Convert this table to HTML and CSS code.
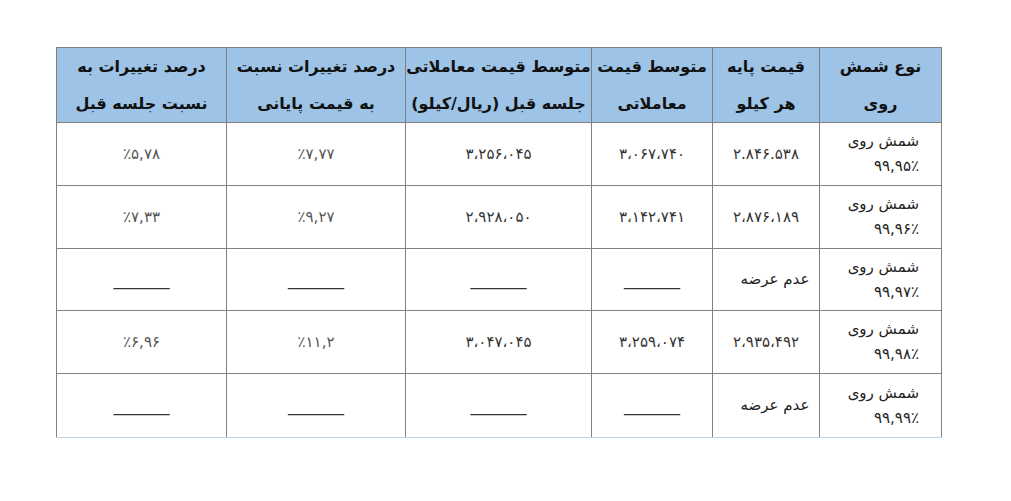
FILE: index.html
```html
<!DOCTYPE html>
<html lang="fa">
<head>
<meta charset="utf-8">
<title>جدول شمش روی</title>
<link rel="stylesheet" href="styles.css">
</head>
<body>
<div class="page">
<table class="grid" dir="rtl">
  <colgroup>
    <col class="c-type">
    <col class="c-base">
    <col class="c-avg">
    <col class="c-prev">
    <col class="c-chg-final">
    <col class="c-chg-prev">
  </colgroup>
  <thead>
    <tr class="head">
      <th>نوع شمش<br>روی</th>
      <th>قیمت پایه<br>هر کیلو</th>
      <th>متوسط قیمت<br>معاملاتی</th>
      <th>متوسط قیمت معاملاتی<br>جلسه قبل (ریال/کیلو)</th>
      <th>درصد تغییرات نسبت<br>به قیمت پایانی</th>
      <th>درصد تغییرات به<br>نسبت جلسه قبل</th>
    </tr>
  </thead>
  <tbody>
    <tr class="r63">
      <td class="type">شمش روی<br>۹۹,۹۵٪</td>
      <td>۲.۸۴۶.۵۳۸</td>
      <td>۳،۰۶۷،۷۴۰</td>
      <td>۳،۲۵۶،۰۴۵</td>
      <td class="pct">٪۷,۷۷</td>
      <td class="pct">٪۵,۷۸</td>
    </tr>
    <tr class="r63">
      <td class="type">شمش روی<br>۹۹,۹۶٪</td>
      <td>۲،۸۷۶،۱۸۹</td>
      <td>۳،۱۴۲،۷۴۱</td>
      <td>۲،۹۲۸،۰۵۰</td>
      <td class="pct">٪۹,۲۷</td>
      <td class="pct">٪۷,۳۳</td>
    </tr>
    <tr class="r62">
      <td class="type">شمش روی<br>۹۹,۹۷٪</td>
      <td class="na">عدم عرضه</td>
      <td class="dash">_______</td>
      <td class="dash">_______</td>
      <td class="dash">_______</td>
      <td class="dash">_______</td>
    </tr>
    <tr class="r63">
      <td class="type">شمش روی<br>۹۹,۹۸٪</td>
      <td>۲،۹۳۵،۴۹۲</td>
      <td>۳،۲۵۹،۰۷۴</td>
      <td>۳،۰۴۷،۰۴۵</td>
      <td class="pct">٪۱۱,۲</td>
      <td class="pct">٪۶,۹۶</td>
    </tr>
    <tr class="r64 last">
      <td class="type">شمش روی<br>۹۹,۹۹٪</td>
      <td class="na">عدم عرضه</td>
      <td class="dash">_______</td>
      <td class="dash">_______</td>
      <td class="dash">_______</td>
      <td class="dash">_______</td>
    </tr>
  </tbody>
</table>
</div>
</body>
</html>
```

FILE: styles.css
```css
html, body {
  margin: 0;
  padding: 0;
  background: #ffffff;
}

.page {
  padding: 47px 0 0 56px;
}

.grid {
  border-collapse: collapse;
  table-layout: fixed;
  width: 885px;
  font-family: "DejaVu Sans", sans-serif;
  color: #222222;
}

.c-type { width: 122px; }
.c-base { width: 107px; }
.c-avg { width: 121px; }
.c-prev { width: 186px; }
.c-chg-final { width: 179px; }
.c-chg-prev { width: 170px; }

.grid th,
.grid td {
  border: 1px solid #7f7f7f;
  padding: 0;
  text-align: center;
  vertical-align: middle;
}

.head th {
  background: #9dc3e6;
  height: 73px;
  font-size: 16px;
  font-weight: bold;
  line-height: 37px;
  color: #111111;
}

.grid td {
  font-size: 15px;
  line-height: 25px;
  color: #333333;
}

.r63 td { height: 62px; }
.r62 td { height: 61px; }
.r64 td { height: 63px; }

.grid td.type {
  text-align: right;
  padding-right: 22px;
  font-size: 15px;
  color: #222222;
}

.grid td.pct {
  color: #555555;
}

.grid td.na {
  padding-left: 18px;
  color: #222222;
}

.grid td.dash {
  font-size: 16px;
  color: #333333;
}

.last td {
  border-bottom-color: #bcd6e8;
}
```
